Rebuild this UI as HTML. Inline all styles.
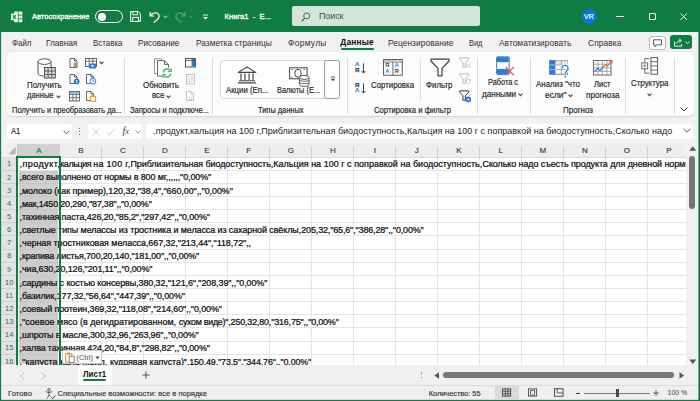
<!DOCTYPE html>
<html><head><meta charset="utf-8"><title>Excel</title>
<style>
html,body{margin:0;padding:0;}
body{width:700px;height:401px;overflow:hidden;position:relative;background:#f3f3f3;font-family:"Liberation Sans",sans-serif;}
.t{position:absolute;white-space:pre;margin:0;padding:0;}
.b{position:absolute;box-sizing:border-box;}
svg{overflow:visible;}
</style></head><body>
<div class="b" style="left:0px;top:0px;width:700px;height:32px;background:#107c41;"></div>
<div class="b" style="left:0px;top:32px;width:700px;height:369px;background:#f1f1f1;"></div>
<div class="b" style="left:6.8px;top:52px;width:686.8000000000001px;height:64.2px;background:#fcfcfc;border-radius:5px;box-shadow:0 0.6px 1.6px rgba(0,0,0,0.13);"></div>
<svg class="b" style="left:11px;top:10.6px;" width="11.8" height="11.8" viewBox="0 0 13 13">
<rect x="3.5" y="0.5" width="9" height="12" rx="1" fill="#e8f1ec"/>
<path d="M8 0.5V12.5M3.5 4.5H12.5M3.5 8.5H12.5" stroke="#107c41" stroke-width="0.9"/>
<rect x="0" y="2.8" width="7.4" height="7.4" rx="0.8" fill="#e8f1ec"/>
<path d="M2 4.6L5.4 8.6M5.4 4.6L2 8.6" stroke="#107c41" stroke-width="1.2"/></svg>
<div class="t" style="left:32.00px;top:10.90px;font-size:7.50px;line-height:11px;letter-spacing:0.025px;color:#fff;-webkit-text-stroke:0.30px #fff;">Автосохранение</div>
<div class="b" style="left:94.5px;top:10px;width:28.5px;height:13px;border:1.2px solid #fff;border-radius:7px;"></div>
<div class="b" style="left:97.5px;top:12.5px;width:8.0px;height:8.0px;background:#fff;border-radius:4px;"></div>
<svg class="b" style="left:130px;top:11px;" width="11" height="11" viewBox="0 0 11 11"><path d="M0.6 0.6H8.4L10.4 2.6V10.4H0.6Z M2.8 0.6V3.8H7.6V0.6 M2.6 10.4V6.4H8.4V10.4" fill="none" stroke="#fff" stroke-width="1"/></svg>
<svg class="b" style="left:149px;top:10.5px;" width="12" height="12" viewBox="0 0 12 12"><path d="M1.2 1V5H5.2" fill="none" stroke="#fff" stroke-width="1.2"/><path d="M1.6 4.6C3.5 1.2 8.2 0.8 9.8 3.8C11 6.4 8.6 9 4.6 11.4" fill="none" stroke="#fff" stroke-width="1.2"/></svg>
<svg class="b" style="left:163px;top:15px;" width="5" height="4" viewBox="0 0 5 4"><path d="M0.5 0.8L2.5 2.8L4.5 0.8" fill="none" stroke="#fff" stroke-width="0.9"/></svg>
<svg class="b" style="left:174px;top:10.5px;" width="12" height="12" viewBox="0 0 12 12"><path d="M10.8 1V5H6.8" fill="none" stroke="#5fa47f" stroke-width="1.2"/><path d="M10.4 4.6C8.5 1.2 3.8 0.8 2.2 3.8C1 6.4 3.4 9 7.4 11.4" fill="none" stroke="#5fa47f" stroke-width="1.2"/></svg>
<svg class="b" style="left:188px;top:15px;" width="5" height="4" viewBox="0 0 5 4"><path d="M0.5 0.8L2.5 2.8L4.5 0.8" fill="none" stroke="#5fa47f" stroke-width="0.9"/></svg>
<svg class="b" style="left:202px;top:13.5px;" width="7" height="7" viewBox="0 0 7 7"><path d="M1 1H6" stroke="#fff" stroke-width="0.9"/><path d="M1 3L3.5 5.6L6 3Z" fill="#fff"/></svg>
<div class="t" style="left:224.50px;top:10.90px;font-size:7.60px;line-height:11px;letter-spacing:0.014px;color:#fff;-webkit-text-stroke:0.30px #fff;">Книга1  -  E...</div>
<div class="b" style="left:292px;top:6.4px;width:188px;height:20.0px;background:#d4e4db;border-radius:2px;"></div>
<svg class="b" style="left:301px;top:11.5px;" width="10" height="10" viewBox="0 0 10 10"><circle cx="5.7" cy="3.9" r="3" fill="none" stroke="#2a6a46" stroke-width="0.95"/><path d="M3.6 6.1L0.7 9.4" stroke="#2a6a46" stroke-width="1.05"/></svg>
<div class="t" style="left:319.00px;top:10.30px;font-size:8.84px;line-height:13px;letter-spacing:0.000px;color:#245c3e;">Поиск</div>
<div class="b" style="left:581.7px;top:9.2px;width:15.0px;height:15.0px;background:#1270dd;border-radius:8px;"></div>
<div class="t" style="left:584.40px;top:11.20px;font-size:7.20px;line-height:11px;letter-spacing:0.000px;color:#fff;-webkit-text-stroke:0.20px #fff;transform:scaleX(0.9798);transform-origin:0 50%;">VR</div>
<div class="b" style="left:616.2px;top:16.1px;width:8.0px;height:1.0px;background:#fff;"></div>
<div class="b" style="left:648.6px;top:13.1px;width:7.199999999999932px;height:7.200000000000001px;border:1px solid #fff;border-radius:1px;"></div>
<svg class="b" style="left:680px;top:13px;" width="7.4" height="7.4" viewBox="0 0 7.4 7.4"><path d="M0.5 0.5L6.9 6.9M6.9 0.5L0.5 6.9" stroke="#fff" stroke-width="1"/></svg>
<div class="t" style="left:12.00px;top:36.60px;font-size:8.40px;line-height:12px;letter-spacing:0.000px;color:#303030;transform:scaleX(0.9442);transform-origin:0 50%;">Файл</div>
<div class="t" style="left:46.00px;top:36.60px;font-size:8.40px;line-height:12px;letter-spacing:-0.079px;color:#303030;">Главная</div>
<div class="t" style="left:93.00px;top:36.60px;font-size:8.40px;line-height:12px;letter-spacing:0.000px;color:#303030;transform:scaleX(0.9449);transform-origin:0 50%;">Вставка</div>
<div class="t" style="left:137.50px;top:36.60px;font-size:8.40px;line-height:12px;letter-spacing:0.000px;color:#303030;transform:scaleX(0.9810);transform-origin:0 50%;">Рисование</div>
<div class="t" style="left:196.00px;top:36.60px;font-size:8.40px;line-height:12px;letter-spacing:-0.013px;color:#303030;">Разметка страницы</div>
<div class="t" style="left:288.00px;top:36.60px;font-size:8.40px;line-height:12px;letter-spacing:0.324px;color:#303030;">Формулы</div>
<div class="t" style="left:388.00px;top:36.60px;font-size:8.40px;line-height:12px;letter-spacing:0.049px;color:#303030;">Рецензирование</div>
<div class="t" style="left:469.00px;top:36.60px;font-size:8.40px;line-height:12px;letter-spacing:0.000px;color:#303030;transform:scaleX(0.8883);transform-origin:0 50%;">Вид</div>
<div class="t" style="left:499.00px;top:36.60px;font-size:8.40px;line-height:12px;letter-spacing:0.028px;color:#303030;">Автоматизировать</div>
<div class="t" style="left:588.00px;top:36.60px;font-size:8.40px;line-height:12px;letter-spacing:0.091px;color:#303030;">Справка</div>
<div class="t" style="left:340.30px;top:36.30px;font-size:8.40px;line-height:12px;letter-spacing:0.170px;color:#111;font-weight:bold;">Данные</div>
<div class="b" style="left:340.5px;top:47.8px;width:33.5px;height:1.8000000000000043px;background:#107c41;border-radius:1px;"></div>
<div class="b" style="left:648.5px;top:35.5px;width:17.0px;height:14.0px;background:#fff;border:1px solid #b9b9b9;border-radius:3px;"></div>
<svg class="b" style="left:652.5px;top:38.5px;" width="9" height="9" viewBox="0 0 9 9"><path d="M0.6 0.8H8.4V5.8H3.8L2 7.8V5.8H0.6Z" fill="none" stroke="#444" stroke-width="0.9"/></svg>
<div class="b" style="left:670px;top:35.2px;width:21.5px;height:14.299999999999997px;background:#107c41;border-radius:3px;"></div>
<svg class="b" style="left:673.6px;top:38px;" width="10" height="9" viewBox="0 0 10 9"><path d="M0.6 3.4V8.2H7.6V6" fill="none" stroke="#fff" stroke-width="0.9"/><path d="M2.6 5.6C3 3.6 4.6 2.6 6.4 2.6M5 0.6L7.4 2.6L5 4.6" fill="none" stroke="#fff" stroke-width="0.9"/></svg>
<svg class="b" style="left:684.6px;top:41px;" width="5" height="4" viewBox="0 0 5 4"><path d="M0.5 0.6L2.5 2.6L4.5 0.6" fill="none" stroke="#fff" stroke-width="0.9"/></svg>
<div class="b" style="left:123.89999999999999px;top:57.5px;width:0.8000000000000114px;height:56.5px;background:#dcdcdc;"></div>
<div class="b" style="left:212.1px;top:57.5px;width:0.8000000000000114px;height:56.5px;background:#dcdcdc;"></div>
<div class="b" style="left:347.1px;top:57.5px;width:0.7999999999999545px;height:56.5px;background:#dcdcdc;"></div>
<div class="b" style="left:476.70000000000005px;top:57.5px;width:0.7999999999999545px;height:56.5px;background:#dcdcdc;"></div>
<div class="b" style="left:529.6px;top:57.5px;width:0.7999999999999545px;height:56.5px;background:#dcdcdc;"></div>
<div class="b" style="left:624.6px;top:57.5px;width:0.7999999999999545px;height:56.5px;background:#dcdcdc;"></div>
<div class="b" style="left:673.6px;top:57.5px;width:0.7999999999999545px;height:56.5px;background:#dcdcdc;"></div>
<div class="b" style="left:420.0px;top:58.5px;width:0.7999999999999545px;height:41.5px;background:#dcdcdc;"></div>
<div class="t" style="left:12.00px;top:104.30px;font-size:8.80px;line-height:13px;letter-spacing:0.000px;color:#262626;-webkit-text-stroke:0.18px #262626;transform:scaleX(0.8514);transform-origin:0 50%;">Получить и преобразовать да...</div>
<div class="t" style="left:130.00px;top:104.30px;font-size:8.80px;line-height:13px;letter-spacing:0.000px;color:#262626;-webkit-text-stroke:0.18px #262626;transform:scaleX(0.8568);transform-origin:0 50%;">Запросы и подключе...</div>
<div class="t" style="left:258.00px;top:104.30px;font-size:8.80px;line-height:13px;letter-spacing:0.000px;color:#262626;-webkit-text-stroke:0.18px #262626;transform:scaleX(0.8439);transform-origin:0 50%;">Типы данных</div>
<div class="t" style="left:374.00px;top:104.30px;font-size:8.80px;line-height:13px;letter-spacing:0.000px;color:#262626;-webkit-text-stroke:0.18px #262626;transform:scaleX(0.8729);transform-origin:0 50%;">Сортировка и фильтр</div>
<div class="t" style="left:563.00px;top:104.30px;font-size:8.80px;line-height:13px;letter-spacing:0.000px;color:#262626;-webkit-text-stroke:0.18px #262626;transform:scaleX(0.9087);transform-origin:0 50%;">Прогноз</div>
<svg class="b" style="left:36.5px;top:57.5px;" width="20" height="22" viewBox="0 0 20 22">
<path d="M1 3.6V15.4C1 17 4 18 7.5 18" fill="none" stroke="#555" stroke-width="1"/>
<path d="M14 3.6V9" fill="none" stroke="#555" stroke-width="1"/>
<ellipse cx="7.5" cy="3.6" rx="6.5" ry="2.8" fill="#fdfdfd" stroke="#555" stroke-width="1"/>
<rect x="7.5" y="9.5" width="10.8" height="10.5" fill="#d9d9d9" stroke="#444" stroke-width="0.9"/>
<path d="M7.5 13H18.3M7.5 16.5H18.3M11.1 9.5V20M14.7 9.5V20" stroke="#444" stroke-width="0.8"/></svg>
<div class="t" style="left:27.00px;top:78.50px;font-size:8.80px;line-height:13px;letter-spacing:0.000px;color:#262626;-webkit-text-stroke:0.18px #262626;transform:scaleX(0.8920);transform-origin:0 50%;">Получить</div>
<div class="t" style="left:27.00px;top:89.30px;font-size:8.80px;line-height:13px;letter-spacing:0.000px;color:#262626;-webkit-text-stroke:0.18px #262626;transform:scaleX(0.8557);transform-origin:0 50%;">данные</div>
<svg class="b" style="left:55.5px;top:94.5px;" width="5" height="4" viewBox="0 0 5 4"><path d="M0.6 0.7L2.5 2.7L4.4 0.7" fill="none" stroke="#444" stroke-width="1.15"/></svg>
<svg class="b" style="left:69px;top:58px;" width="11" height="11" viewBox="0 0 11 11"><path d="M1.0 0.5H5.5L8.0 3V9.5H1.0Z M5.5 0.5V3H8.0" fill="#fff" stroke="#555" stroke-width="0.9"/><rect x="4.6" y="4.6" width="3.6" height="4.6" fill="#9a9a9a"/></svg>
<svg class="b" style="left:69px;top:74px;" width="11" height="11" viewBox="0 0 11 11"><path d="M1.0 0.5H5.5L8.0 3V9.5H1.0Z M5.5 0.5V3H8.0" fill="#fff" stroke="#555" stroke-width="0.9"/><circle cx="7.6" cy="7.4" r="2.9" fill="#2b7cd3"/><path d="M7.6 6V9" stroke="#fff" stroke-width="0.9"/></svg>
<svg class="b" style="left:68.5px;top:91px;" width="11" height="11" viewBox="0 0 11 11"><rect x="0.5" y="0.5" width="10" height="9.5" fill="#fff" stroke="#555" stroke-width="0.9"/><path d="M0.5 3.4H10.5M0.5 6.6H10.5M3.8 0.5V10M7.2 0.5V10" stroke="#555" stroke-width="0.8"/><rect x="0.9" y="0.9" width="9.2" height="2.2" fill="#8fbce8"/></svg>
<svg class="b" style="left:84.5px;top:57.5px;" width="12" height="11" viewBox="0 0 12 11"><rect x="0.5" y="0.5" width="11" height="8" fill="#fff" stroke="#555" stroke-width="0.9"/><path d="M0.5 3.2H11.5M4.2 0.5V8.5M7.8 0.5V8.5" stroke="#555" stroke-width="0.8"/><rect x="4" y="5.4" width="7" height="5" rx="0.6" fill="#2b7cd3"/><circle cx="7.5" cy="7.9" r="1.1" fill="#fff"/></svg>
<svg class="b" style="left:99px;top:61px;" width="5" height="4" viewBox="0 0 5 4"><path d="M0.6 0.7L2.5 2.7L4.4 0.7" fill="none" stroke="#444" stroke-width="1.15"/></svg>
<svg class="b" style="left:85.5px;top:74px;" width="11" height="11" viewBox="0 0 11 11"><path d="M0.5 0.5H5L7.5 3V9.5H0.5Z M5 0.5V3H7.5" fill="#fff" stroke="#555" stroke-width="0.9"/><circle cx="6.9" cy="7.2" r="2.9" fill="#fff" stroke="#2b7cd3" stroke-width="1"/><path d="M6.9 5.6V7.4H8.2" fill="none" stroke="#2b7cd3" stroke-width="0.8"/></svg>
<svg class="b" style="left:85.5px;top:91px;" width="11" height="11" viewBox="0 0 11 11"><path d="M0.5 0.5H5L7.5 3V9.5H0.5Z M5 0.5V3H7.5" fill="#fff" stroke="#555" stroke-width="0.9"/><rect x="4.4" y="5.4" width="5.2" height="4.8" fill="#fff" stroke="#e8912d" stroke-width="1"/><path d="M5.8 5.2V4.2H8.2V5.2" fill="none" stroke="#e8912d" stroke-width="0.9"/></svg>
<svg class="b" style="left:152.5px;top:57.5px;" width="21" height="22" viewBox="0 0 21 22">
<path d="M1.5 0.8H8L11 3.8V15.5H1.5Z" fill="#fff" stroke="#8a8a8a" stroke-width="0.9"/>
<path d="M4.5 2.6H11.5L15.5 6.6V18H4.5Z" fill="#fff" stroke="#555" stroke-width="0.9"/>
<path d="M11.5 2.6V6.6H15.5" fill="none" stroke="#555" stroke-width="0.9"/>
<circle cx="14" cy="15" r="5.7" fill="#fcfcfc"/>
<path d="M10.3 14.3A3.8 3.8 0 0 1 17.3 12.7" fill="none" stroke="#53b471" stroke-width="1.5"/>
<path d="M18.2 10.2V13.5H14.9" fill="none" stroke="#53b471" stroke-width="1.2"/>
<path d="M17.7 15.7A3.8 3.8 0 0 1 10.7 17.3" fill="none" stroke="#53b471" stroke-width="1.5"/>
<path d="M9.8 19.8V16.5H13.1" fill="none" stroke="#53b471" stroke-width="1.2"/></svg>
<div class="t" style="left:143.00px;top:78.50px;font-size:8.80px;line-height:13px;letter-spacing:0.000px;color:#262626;-webkit-text-stroke:0.18px #262626;transform:scaleX(0.9035);transform-origin:0 50%;">Обновить</div>
<div class="t" style="left:152.00px;top:89.30px;font-size:8.80px;line-height:13px;letter-spacing:0.000px;color:#262626;-webkit-text-stroke:0.18px #262626;transform:scaleX(0.9012);transform-origin:0 50%;">все</div>
<svg class="b" style="left:166px;top:94.5px;" width="5" height="4" viewBox="0 0 5 4"><path d="M0.6 0.7L2.5 2.7L4.4 0.7" fill="none" stroke="#444" stroke-width="1.15"/></svg>
<svg class="b" style="left:184.5px;top:57.5px;" width="11" height="10" viewBox="0 0 11 10"><rect x="0.5" y="0.5" width="10" height="8.5" fill="#fff" stroke="#444" stroke-width="0.9"/><rect x="6.6" y="1" width="3.4" height="7.5" fill="#2b7cd3"/><path d="M0.5 2.6H10.5" stroke="#444" stroke-width="0.8"/></svg>
<svg class="b" style="left:185.5px;top:73.5px;" width="10" height="11" viewBox="0 0 10 11"><rect x="0.5" y="0.5" width="8" height="9.5" fill="#f6f6f6" stroke="#bdbdbd" stroke-width="0.9"/><path d="M2.4 3H4M5 3H6.8M2.4 5.2H4M5 5.2H6.8M2.4 7.4H4M5 7.4H6.8" stroke="#c2c2c2" stroke-width="0.8"/></svg>
<svg class="b" style="left:185.5px;top:91px;" width="10" height="11" viewBox="0 0 10 11"><path d="M0.5 0.5H5L7.5 3V9.5H0.5Z M5 0.5V3H7.5" fill="#fff" stroke="#bdbdbd" stroke-width="0.9"/><path d="M3 6.5C4 5 5 8 6.6 6.4M3 8.4H6.8" fill="none" stroke="#c6c6c6" stroke-width="0.8"/></svg>
<div class="b" style="left:219.8px;top:59.6px;width:120.39999999999998px;height:39.6px;background:#fdfdfd;border:0.8px solid #d9d9d9;border-radius:3.5px;"></div>
<div class="b" style="left:324.4px;top:59.6px;width:15.800000000000011px;height:39.6px;background:#fff;border:0.9px solid #9a9a9a;border-radius:2.5px;"></div>
<svg class="b" style="left:329.5px;top:76px;" width="6" height="6" viewBox="0 0 6 6"><path d="M0.8 1H5.2" stroke="#444" stroke-width="0.8"/><path d="M0.8 2.8H5.2L3 5.2Z" fill="#444"/></svg>
<svg class="b" style="left:237px;top:66.3px;" width="20" height="18" viewBox="0 0 20 18">
<path d="M1.2 6.4L10 1L18.8 6.4Z" fill="#fff" stroke="#444" stroke-width="1.1" stroke-linejoin="round"/>
<path d="M4 7.5V14M7.9 7.5V14M12.1 7.5V14M16 7.5V14" stroke="#444" stroke-width="1.2"/>
<path d="M2 14.8H18M1 16.9H19" stroke="#444" stroke-width="1.1"/></svg>
<div class="t" style="left:226.00px;top:83.50px;font-size:8.80px;line-height:13px;letter-spacing:0.000px;color:#262626;-webkit-text-stroke:0.18px #262626;transform:scaleX(0.8842);transform-origin:0 50%;">Акции (En...</div>
<svg class="b" style="left:288.5px;top:66.6px;" width="21" height="20" viewBox="0 0 21 20">
<rect x="0.6" y="0.8" width="17.5" height="11" fill="#fff" stroke="#444" stroke-width="1"/>
<ellipse cx="9" cy="6.3" rx="3.2" ry="4" fill="none" stroke="#444" stroke-width="1"/>
<path d="M2.4 2.4H3.8M14.6 2.4H16M2.4 10.2H3.8" stroke="#444" stroke-width="0.9"/>
<path d="M10.4 10.6V17.2C10.4 18.6 12.4 19.4 15.2 19.4C18 19.4 20 18.6 20 17.2V10.6" fill="#fff" stroke="#444" stroke-width="0.9"/>
<ellipse cx="15.2" cy="10.4" rx="4.8" ry="2" fill="#fff" stroke="#444" stroke-width="0.9"/>
<path d="M10.4 13C11 14.6 19.4 14.6 20 13M10.4 15.4C11 17 19.4 17 20 15.4" fill="none" stroke="#444" stroke-width="0.8"/></svg>
<div class="t" style="left:277.00px;top:83.50px;font-size:8.80px;line-height:13px;letter-spacing:0.000px;color:#262626;-webkit-text-stroke:0.18px #262626;transform:scaleX(0.8392);transform-origin:0 50%;">Валюты (E...</div>
<div class="t" style="left:355px;top:62.3px;font-size:6px;line-height:5.6px;font-weight:bold;color:#3a96dd;-webkit-text-stroke:0.25px #3a96dd;">А</div>
<div class="t" style="left:355px;top:67.89999999999999px;font-size:6px;line-height:5.6px;font-weight:bold;color:#3a3a3a;-webkit-text-stroke:0.25px #3a3a3a;">Я</div>
<svg class="b" style="left:361.1px;top:62.5px;" width="5" height="11" viewBox="0 0 5 11"><path d="M2.5 0.3V10M0.7 8L2.5 10.1L4.3 8" fill="none" stroke="#3a3a3a" stroke-width="0.95"/></svg>
<div class="t" style="left:355px;top:82.8px;font-size:6px;line-height:5.6px;font-weight:bold;color:#3a3a3a;-webkit-text-stroke:0.25px #3a3a3a;">Я</div>
<div class="t" style="left:355px;top:88.39999999999999px;font-size:6px;line-height:5.6px;font-weight:bold;color:#3a96dd;-webkit-text-stroke:0.25px #3a96dd;">А</div>
<svg class="b" style="left:361.1px;top:83.0px;" width="5" height="11" viewBox="0 0 5 11"><path d="M2.5 0.3V10M0.7 8L2.5 10.1L4.3 8" fill="none" stroke="#3a3a3a" stroke-width="0.95"/></svg>
<svg class="b" style="left:383px;top:58.5px;" width="20" height="17" viewBox="0 0 20 17">
<rect x="0.6" y="0.6" width="18.6" height="15.6" fill="#fff" stroke="#444" stroke-width="0.9"/>
<path d="M0.6 3H19.2M9.9 0.6V16.2" stroke="#444" stroke-width="0.8"/>
<rect x="1" y="1" width="17.8" height="1.8" fill="#c8c8c8"/></svg>
<div class="t" style="left:385.2px;top:62.400000000000006px;font-size:5.8px;line-height:6px;font-weight:bold;color:#444;">Я</div>
<div class="t" style="left:385.2px;top:68.4px;font-size:5.8px;line-height:6px;font-weight:bold;color:#2b7cd3;">А</div>
<div class="t" style="left:394.4px;top:62.400000000000006px;font-size:5.8px;line-height:6px;font-weight:bold;color:#2b7cd3;">А</div>
<div class="t" style="left:394.4px;top:68.4px;font-size:5.8px;line-height:6px;font-weight:bold;color:#444;">Я</div>
<div class="t" style="left:371.00px;top:78.50px;font-size:8.80px;line-height:13px;letter-spacing:0.000px;color:#262626;-webkit-text-stroke:0.18px #262626;transform:scaleX(0.8903);transform-origin:0 50%;">Сортировка</div>
<svg class="b" style="left:430px;top:57.5px;" width="20" height="19" viewBox="0 0 20 19"><path d="M1 1.2H19V3L12 10.4V17.8H8V10.4L1 3Z" fill="#fff" stroke="#444" stroke-width="1.25" stroke-linejoin="round"/></svg>
<div class="t" style="left:426.00px;top:78.50px;font-size:8.80px;line-height:13px;letter-spacing:0.000px;color:#262626;-webkit-text-stroke:0.18px #262626;transform:scaleX(0.8964);transform-origin:0 50%;">Фильтр</div>
<svg class="b" style="left:458.6px;top:56.8px;" width="13.2" height="12.1" viewBox="0 0 12 11"><path d="M0.6 0.8H8.8V2L5.8 5.2V9.4H3.6V5.2L0.6 2Z" fill="#fff" stroke="#b9b9b9" stroke-width="0.9" stroke-linejoin="round"/><path d="M7 6.4L10.4 9.8M10.4 6.4L7 9.8" stroke="#c8c8c8" stroke-width="0.9"/></svg>
<svg class="b" style="left:458.6px;top:73.2px;" width="13.2" height="12.1" viewBox="0 0 12 11"><path d="M0.6 0.8H8.8V2L5.8 5.2V9.4H3.6V5.2L0.6 2Z" fill="#fff" stroke="#b9b9b9" stroke-width="0.9" stroke-linejoin="round"/><path d="M9.6 6A2 2 0 1 0 10.4 8.6M10.6 5.4V7H9" fill="none" stroke="#c8c8c8" stroke-width="0.8"/></svg>
<svg class="b" style="left:458.6px;top:90.4px;" width="13.2" height="13.2" viewBox="0 0 12 12"><path d="M0.6 0.8H8.8V2L5.8 5.2V9.4H3.6V5.2L0.6 2Z" fill="#fff" stroke="#333" stroke-width="0.9" stroke-linejoin="round"/><circle cx="8.4" cy="8.6" r="2.6" fill="#2b7cd3"/><circle cx="8.4" cy="8.6" r="0.9" fill="#fff"/></svg>
<svg class="b" style="left:496px;top:56px;" width="20" height="21" viewBox="0 0 20 21">
<rect x="0.6" y="0.8" width="12.6" height="17.6" rx="0.8" fill="#fff" stroke="#2b7cd3" stroke-width="1"/>
<rect x="1" y="1.2" width="11.8" height="5.4" fill="#2b7cd3"/>
<rect x="1" y="12.6" width="11.8" height="5.4" fill="#2b7cd3"/>
<path d="M0.6 6.6H13.2M0.6 12.6H13.2" stroke="#fff" stroke-width="0.8"/>
<path d="M9.6 11L17.8 19.2M17.8 11L9.6 19.2" stroke="#ea5b53" stroke-width="1.25"/></svg>
<div class="t" style="left:488.00px;top:76.10px;font-size:8.80px;line-height:13px;letter-spacing:0.000px;color:#262626;-webkit-text-stroke:0.18px #262626;transform:scaleX(0.8360);transform-origin:0 50%;">Работа с</div>
<div class="t" style="left:482.00px;top:88.00px;font-size:8.80px;line-height:13px;letter-spacing:0.000px;color:#262626;-webkit-text-stroke:0.18px #262626;transform:scaleX(0.9179);transform-origin:0 50%;">данными</div>
<svg class="b" style="left:517.5px;top:93.2px;" width="5" height="4" viewBox="0 0 5 4"><path d="M0.6 0.7L2.5 2.7L4.4 0.7" fill="none" stroke="#444" stroke-width="1.15"/></svg>
<svg class="b" style="left:548.8px;top:59.6px;" width="22" height="18" viewBox="0 0 22 18">
<rect x="0.6" y="0.6" width="18" height="13.6" fill="#fff" stroke="#7a7a7a" stroke-width="0.9"/>
<rect x="6.4" y="0.6" width="12.2" height="4.4" fill="#e4e4e4"/>
<path d="M6.4 5H18.6M6.4 9.6H18.6M12.4 0.6V14.2" stroke="#8a8a8a" stroke-width="0.75"/>
<rect x="0.4" y="0.4" width="6" height="14" fill="#2b7cd3"/>
<path d="M0.4 5H6.4M0.4 9.6H6.4" stroke="#bcd9f3" stroke-width="0.8"/>
<path d="M12.6 8.4A3.3 3.1 0 1 1 17.6 11C16.6 11.8 16.3 12.4 16.3 13.8" fill="none" stroke="#fcfcfc" stroke-width="3.2"/>
<path d="M12.8 8.4A3.1 3 0 1 1 17.4 11C16.5 11.8 16.3 12.4 16.3 13.8" fill="none" stroke="#2b7cd3" stroke-width="1.3"/>
<circle cx="16.3" cy="16.6" r="0.95" fill="#2b7cd3"/></svg>
<div class="t" style="left:536.00px;top:78.10px;font-size:8.80px;line-height:13px;letter-spacing:0.000px;color:#262626;-webkit-text-stroke:0.18px #262626;transform:scaleX(0.9037);transform-origin:0 50%;">Анализ "что</div>
<div class="t" style="left:544.50px;top:88.70px;font-size:8.80px;line-height:13px;letter-spacing:0.000px;color:#262626;-webkit-text-stroke:0.18px #262626;transform:scaleX(0.9569);transform-origin:0 50%;">если"</div>
<svg class="b" style="left:567.5px;top:94px;" width="5" height="4" viewBox="0 0 5 4"><path d="M0.6 0.7L2.5 2.7L4.4 0.7" fill="none" stroke="#444" stroke-width="1.15"/></svg>
<svg class="b" style="left:592.5px;top:58.5px;" width="20" height="17" viewBox="0 0 20 17">
<rect x="0.6" y="1.6" width="17.4" height="14.4" fill="#fff" stroke="#555" stroke-width="0.9"/>
<path d="M0.6 5.2H18M0.6 8.8H18M0.6 12.4H18M5 1.6V16M9.4 1.6V16M13.8 1.6V16" stroke="#8a8a8a" stroke-width="0.7"/>
<path d="M1.4 12.6L4.6 9.4L7.2 11.4L10 8.4" fill="none" stroke="#2b7cd3" stroke-width="1.2"/>
<path d="M10 8.4L12.6 5.6L14.6 7L18.2 2" fill="none" stroke="#e8554e" stroke-width="1.2"/>
<path d="M15.8 1.2H19V4.6" fill="none" stroke="#e8554e" stroke-width="1.1"/></svg>
<div class="t" style="left:594.00px;top:78.10px;font-size:8.80px;line-height:13px;letter-spacing:0.000px;color:#262626;-webkit-text-stroke:0.18px #262626;transform:scaleX(0.8629);transform-origin:0 50%;">Лист</div>
<div class="t" style="left:585.50px;top:88.70px;font-size:8.80px;line-height:13px;letter-spacing:0.000px;color:#262626;-webkit-text-stroke:0.18px #262626;transform:scaleX(0.9216);transform-origin:0 50%;">прогноза</div>
<svg class="b" style="left:640.6px;top:56.6px;" width="18" height="18" viewBox="0 0 18 18">
<rect x="10" y="0.6" width="6.6" height="16.6" fill="#fff" stroke="#555" stroke-width="0.95"/>
<path d="M10 4.75H16.6M10 8.9H16.6M10 13.05H16.6" stroke="#555" stroke-width="0.85"/>
<path d="M8.4 1.6H3.8V16.2H8.4" fill="none" stroke="#555" stroke-width="0.85"/>
<rect x="0.8" y="5.9" width="5.9" height="5.9" fill="#fff" stroke="#555" stroke-width="0.85"/>
<path d="M2.3 8.85H5.2M3.75 7.4V10.3" stroke="#2b7cd3" stroke-width="0.95"/></svg>
<div class="t" style="left:631.00px;top:76.70px;font-size:8.80px;line-height:13px;letter-spacing:0.000px;color:#262626;-webkit-text-stroke:0.18px #262626;transform:scaleX(0.8982);transform-origin:0 50%;">Структура</div>
<svg class="b" style="left:647px;top:93px;" width="5" height="4" viewBox="0 0 5 4"><path d="M0.6 0.7L2.5 2.7L4.4 0.7" fill="none" stroke="#444" stroke-width="1.15"/></svg>
<svg class="b" style="left:680px;top:106.5px;" width="8" height="5" viewBox="0 0 8 5"><path d="M0.6 0.6L4 4L7.4 0.6" fill="none" stroke="#444" stroke-width="1"/></svg>
<div class="b" style="left:7.4px;top:123.9px;width:64.8px;height:15.0px;background:#fff;border-radius:3px;"></div>
<div class="t" style="left:10.70px;top:124.90px;font-size:8.90px;line-height:13px;letter-spacing:0.000px;color:#1a1a1a;-webkit-text-stroke:0.12px #1a1a1a;transform:scaleX(0.8635);transform-origin:0 50%;">A1</div>
<svg class="b" style="left:63px;top:129.5px;" width="7" height="5" viewBox="0 0 7 5"><path d="M0.6 0.8L3.5 3.8L6.4 0.8" fill="none" stroke="#444" stroke-width="0.9"/></svg>
<div class="b" style="left:78.5px;top:128px;width:1.2000000000000028px;height:1.1999999999999886px;background:#555;border-radius:1px;"></div>
<div class="b" style="left:78.5px;top:131px;width:1.2000000000000028px;height:1.1999999999999886px;background:#555;border-radius:1px;"></div>
<div class="b" style="left:78.5px;top:134px;width:1.2000000000000028px;height:1.1999999999999886px;background:#555;border-radius:1px;"></div>
<div class="b" style="left:87.5px;top:123.9px;width:54.5px;height:15.0px;background:#fff;border-radius:3px;"></div>
<div class="b" style="left:146.3px;top:123.9px;width:546.5px;height:15.0px;background:#fff;border-radius:3px;"></div>
<svg class="b" style="left:91.5px;top:128px;" width="8" height="8" viewBox="0 0 8 8"><path d="M0.6 0.6L7.4 7.4M7.4 0.6L0.6 7.4" stroke="#c9c9c9" stroke-width="0.9"/></svg>
<svg class="b" style="left:106px;top:128px;" width="9" height="8" viewBox="0 0 9 8"><path d="M0.6 4.2L3.2 7L8.4 0.8" fill="none" stroke="#c9c9c9" stroke-width="0.9"/></svg>
<div class="t" style="left:122.5px;top:124.3px;font-family:'Liberation Serif',serif;font-style:italic;font-size:10.5px;line-height:14px;color:#444;letter-spacing:-0.3px;">f<span style="font-size:8.5px;">x</span></div>
<svg class="b" style="left:135px;top:130px;" width="6" height="4" viewBox="0 0 6 4"><path d="M0.5 0.6L3 3.2L5.5 0.6" fill="none" stroke="#777" stroke-width="0.8"/></svg>
<div class="t" style="left:153.30px;top:124.80px;font-size:9.00px;line-height:13px;letter-spacing:0.000px;color:#222;">,продукт,кальция на 100 г,Приблизительная биодоступность,Кальция на 100 г с поправкой на биодоступность,Сколько надо</div>
<svg class="b" style="left:683.3px;top:128.3px;" width="8" height="5" viewBox="0 0 8 5"><path d="M0.6 0.8L4 4.2L7.4 0.8" fill="none" stroke="#444" stroke-width="0.9"/></svg>
<div class="b" style="left:1.3px;top:157.0px;width:684.7px;height:207.5px;background:#fff;"></div>
<div class="b" style="left:1.3px;top:144.0px;width:684.7px;height:13.0px;background:#eeeeee;"></div>
<div class="b" style="left:1.3px;top:144.0px;width:16.2px;height:13.0px;background:#f1f1f1;"></div>
<div class="b" style="left:1.3px;top:157.0px;width:16.2px;height:207.5px;background:#e3e3e3;"></div>
<div class="b" style="left:17.5px;top:144.0px;width:42.0px;height:13.0px;background:#d1d1d1;"></div>
<svg class="b" style="left:7.6px;top:146.4px;" width="8" height="9" viewBox="0 0 8 9"><path d="M7.6 0.4V8.6H0.4Z" fill="#b5b5b5"/></svg>
<div class="b" style="left:19.3px;top:170.15px;width:38.3px;height:194.35px;background:#cdcdcd;"></div>
<div class="b" style="left:59.0px;top:146.0px;width:1.0px;height:11.0px;background:#cfcfcf;"></div>
<div class="b" style="left:59.0px;top:157.0px;width:1.0px;height:207.5px;background:#e5e5e5;"></div>
<div class="b" style="left:101.0px;top:146.0px;width:1.0px;height:11.0px;background:#cfcfcf;"></div>
<div class="b" style="left:101.0px;top:157.0px;width:1.0px;height:207.5px;background:#e5e5e5;"></div>
<div class="b" style="left:143.0px;top:146.0px;width:1.0px;height:11.0px;background:#cfcfcf;"></div>
<div class="b" style="left:143.0px;top:157.0px;width:1.0px;height:207.5px;background:#e5e5e5;"></div>
<div class="b" style="left:185.0px;top:146.0px;width:1.0px;height:11.0px;background:#cfcfcf;"></div>
<div class="b" style="left:185.0px;top:157.0px;width:1.0px;height:207.5px;background:#e5e5e5;"></div>
<div class="b" style="left:227.0px;top:146.0px;width:1.0px;height:11.0px;background:#cfcfcf;"></div>
<div class="b" style="left:227.0px;top:157.0px;width:1.0px;height:207.5px;background:#e5e5e5;"></div>
<div class="b" style="left:269.0px;top:146.0px;width:1.0px;height:11.0px;background:#cfcfcf;"></div>
<div class="b" style="left:269.0px;top:157.0px;width:1.0px;height:207.5px;background:#e5e5e5;"></div>
<div class="b" style="left:311.0px;top:146.0px;width:1.0px;height:11.0px;background:#cfcfcf;"></div>
<div class="b" style="left:311.0px;top:157.0px;width:1.0px;height:207.5px;background:#e5e5e5;"></div>
<div class="b" style="left:353.0px;top:146.0px;width:1.0px;height:11.0px;background:#cfcfcf;"></div>
<div class="b" style="left:353.0px;top:157.0px;width:1.0px;height:207.5px;background:#e5e5e5;"></div>
<div class="b" style="left:395.0px;top:146.0px;width:1.0px;height:11.0px;background:#cfcfcf;"></div>
<div class="b" style="left:395.0px;top:157.0px;width:1.0px;height:207.5px;background:#e5e5e5;"></div>
<div class="b" style="left:437.0px;top:146.0px;width:1.0px;height:11.0px;background:#cfcfcf;"></div>
<div class="b" style="left:437.0px;top:157.0px;width:1.0px;height:207.5px;background:#e5e5e5;"></div>
<div class="b" style="left:479.0px;top:146.0px;width:1.0px;height:11.0px;background:#cfcfcf;"></div>
<div class="b" style="left:479.0px;top:157.0px;width:1.0px;height:207.5px;background:#e5e5e5;"></div>
<div class="b" style="left:521.0px;top:146.0px;width:1.0px;height:11.0px;background:#cfcfcf;"></div>
<div class="b" style="left:521.0px;top:157.0px;width:1.0px;height:207.5px;background:#e5e5e5;"></div>
<div class="b" style="left:563.0px;top:146.0px;width:1.0px;height:11.0px;background:#cfcfcf;"></div>
<div class="b" style="left:563.0px;top:157.0px;width:1.0px;height:207.5px;background:#e5e5e5;"></div>
<div class="b" style="left:605.0px;top:146.0px;width:1.0px;height:11.0px;background:#cfcfcf;"></div>
<div class="b" style="left:605.0px;top:157.0px;width:1.0px;height:207.5px;background:#e5e5e5;"></div>
<div class="b" style="left:647.0px;top:146.0px;width:1.0px;height:11.0px;background:#cfcfcf;"></div>
<div class="b" style="left:647.0px;top:157.0px;width:1.0px;height:207.5px;background:#e5e5e5;"></div>
<div class="b" style="left:17.5px;top:169.65px;width:668.5px;height:1.0px;background:#e5e5e5;"></div>
<div class="b" style="left:1.3px;top:169.65px;width:16.2px;height:1.0px;background:#d2d2d2;"></div>
<div class="b" style="left:17.5px;top:182.8px;width:668.5px;height:1.0px;background:#e5e5e5;"></div>
<div class="b" style="left:1.3px;top:182.8px;width:16.2px;height:1.0px;background:#d2d2d2;"></div>
<div class="b" style="left:17.5px;top:195.95px;width:668.5px;height:1.0px;background:#e5e5e5;"></div>
<div class="b" style="left:1.3px;top:195.95px;width:16.2px;height:1.0px;background:#d2d2d2;"></div>
<div class="b" style="left:17.5px;top:209.1px;width:668.5px;height:1.0px;background:#e5e5e5;"></div>
<div class="b" style="left:1.3px;top:209.1px;width:16.2px;height:1.0px;background:#d2d2d2;"></div>
<div class="b" style="left:17.5px;top:222.25px;width:668.5px;height:1.0px;background:#e5e5e5;"></div>
<div class="b" style="left:1.3px;top:222.25px;width:16.2px;height:1.0px;background:#d2d2d2;"></div>
<div class="b" style="left:17.5px;top:235.4px;width:668.5px;height:1.0px;background:#e5e5e5;"></div>
<div class="b" style="left:1.3px;top:235.4px;width:16.2px;height:1.0px;background:#d2d2d2;"></div>
<div class="b" style="left:17.5px;top:248.55px;width:668.5px;height:1.0px;background:#e5e5e5;"></div>
<div class="b" style="left:1.3px;top:248.55px;width:16.2px;height:1.0px;background:#d2d2d2;"></div>
<div class="b" style="left:17.5px;top:261.7px;width:668.5px;height:1.0px;background:#e5e5e5;"></div>
<div class="b" style="left:1.3px;top:261.7px;width:16.2px;height:1.0px;background:#d2d2d2;"></div>
<div class="b" style="left:17.5px;top:274.85px;width:668.5px;height:1.0px;background:#e5e5e5;"></div>
<div class="b" style="left:1.3px;top:274.85px;width:16.2px;height:1.0px;background:#d2d2d2;"></div>
<div class="b" style="left:17.5px;top:288.0px;width:668.5px;height:1.0px;background:#e5e5e5;"></div>
<div class="b" style="left:1.3px;top:288.0px;width:16.2px;height:1.0px;background:#d2d2d2;"></div>
<div class="b" style="left:17.5px;top:301.15px;width:668.5px;height:1.0px;background:#e5e5e5;"></div>
<div class="b" style="left:1.3px;top:301.15px;width:16.2px;height:1.0px;background:#d2d2d2;"></div>
<div class="b" style="left:17.5px;top:314.3px;width:668.5px;height:1.0px;background:#e5e5e5;"></div>
<div class="b" style="left:1.3px;top:314.3px;width:16.2px;height:1.0px;background:#d2d2d2;"></div>
<div class="b" style="left:17.5px;top:327.45000000000005px;width:668.5px;height:1.0px;background:#e5e5e5;"></div>
<div class="b" style="left:1.3px;top:327.45000000000005px;width:16.2px;height:1.0px;background:#d2d2d2;"></div>
<div class="b" style="left:17.5px;top:340.6px;width:668.5px;height:1.0px;background:#e5e5e5;"></div>
<div class="b" style="left:1.3px;top:340.6px;width:16.2px;height:1.0px;background:#d2d2d2;"></div>
<div class="b" style="left:17.5px;top:353.75px;width:668.5px;height:1.0px;background:#e5e5e5;"></div>
<div class="b" style="left:1.3px;top:353.75px;width:16.2px;height:1.0px;background:#d2d2d2;"></div>
<div class="b" style="left:1.3px;top:156.5px;width:684.7px;height:1.0px;background:#dcdcdc;"></div>
<div class="b" style="left:17.0px;top:144.0px;width:1.0px;height:220.5px;background:#c9c9c9;"></div>
<div class="b" style="left:19.3px;top:182.8px;width:38.3px;height:1.0px;background:#c6c6c6;"></div>
<div class="b" style="left:19.3px;top:195.95px;width:38.3px;height:1.0px;background:#c6c6c6;"></div>
<div class="b" style="left:19.3px;top:209.1px;width:38.3px;height:1.0px;background:#c6c6c6;"></div>
<div class="b" style="left:19.3px;top:222.25px;width:38.3px;height:1.0px;background:#c6c6c6;"></div>
<div class="b" style="left:19.3px;top:235.4px;width:38.3px;height:1.0px;background:#c6c6c6;"></div>
<div class="b" style="left:19.3px;top:248.55px;width:38.3px;height:1.0px;background:#c6c6c6;"></div>
<div class="b" style="left:19.3px;top:261.7px;width:38.3px;height:1.0px;background:#c6c6c6;"></div>
<div class="b" style="left:19.3px;top:274.85px;width:38.3px;height:1.0px;background:#c6c6c6;"></div>
<div class="b" style="left:19.3px;top:288.0px;width:38.3px;height:1.0px;background:#c6c6c6;"></div>
<div class="b" style="left:19.3px;top:301.15px;width:38.3px;height:1.0px;background:#c6c6c6;"></div>
<div class="b" style="left:19.3px;top:314.3px;width:38.3px;height:1.0px;background:#c6c6c6;"></div>
<div class="b" style="left:19.3px;top:327.45000000000005px;width:38.3px;height:1.0px;background:#c6c6c6;"></div>
<div class="b" style="left:19.3px;top:340.6px;width:38.3px;height:1.0px;background:#c6c6c6;"></div>
<div class="b" style="left:19.3px;top:353.75px;width:38.3px;height:1.0px;background:#c6c6c6;"></div>
<div class="t" style="left:36.13px;top:144.80px;font-size:8.00px;line-height:12px;letter-spacing:0.000px;color:#107c41;-webkit-text-stroke:0.15px #107c41;">A</div>
<div class="t" style="left:78.13px;top:144.80px;font-size:8.00px;line-height:12px;letter-spacing:0.000px;color:#333;-webkit-text-stroke:0.15px #333;">B</div>
<div class="t" style="left:119.91px;top:144.80px;font-size:8.00px;line-height:12px;letter-spacing:0.000px;color:#333;-webkit-text-stroke:0.15px #333;">C</div>
<div class="t" style="left:161.91px;top:144.80px;font-size:8.00px;line-height:12px;letter-spacing:-0.000px;color:#333;-webkit-text-stroke:0.15px #333;">D</div>
<div class="t" style="left:204.13px;top:144.80px;font-size:8.00px;line-height:12px;letter-spacing:0.000px;color:#333;-webkit-text-stroke:0.15px #333;">E</div>
<div class="t" style="left:246.36px;top:144.80px;font-size:8.00px;line-height:12px;letter-spacing:-0.000px;color:#333;-webkit-text-stroke:0.15px #333;">F</div>
<div class="t" style="left:287.69px;top:144.80px;font-size:8.00px;line-height:12px;letter-spacing:-0.000px;color:#333;-webkit-text-stroke:0.15px #333;">G</div>
<div class="t" style="left:329.91px;top:144.80px;font-size:8.00px;line-height:12px;letter-spacing:0.000px;color:#333;-webkit-text-stroke:0.15px #333;">H</div>
<div class="t" style="left:373.69px;top:144.80px;font-size:8.00px;line-height:12px;letter-spacing:-0.000px;color:#333;-webkit-text-stroke:0.15px #333;">I</div>
<div class="t" style="left:414.80px;top:144.80px;font-size:8.00px;line-height:12px;letter-spacing:0.000px;color:#333;-webkit-text-stroke:0.15px #333;">J</div>
<div class="t" style="left:456.13px;top:144.80px;font-size:8.00px;line-height:12px;letter-spacing:-0.000px;color:#333;-webkit-text-stroke:0.15px #333;">K</div>
<div class="t" style="left:498.58px;top:144.80px;font-size:8.00px;line-height:12px;letter-spacing:0.000px;color:#333;-webkit-text-stroke:0.15px #333;">L</div>
<div class="t" style="left:539.47px;top:144.80px;font-size:8.00px;line-height:12px;letter-spacing:0.000px;color:#333;-webkit-text-stroke:0.15px #333;">M</div>
<div class="t" style="left:581.91px;top:144.80px;font-size:8.00px;line-height:12px;letter-spacing:-0.000px;color:#333;-webkit-text-stroke:0.15px #333;">N</div>
<div class="t" style="left:623.69px;top:144.80px;font-size:8.00px;line-height:12px;letter-spacing:0.000px;color:#333;-webkit-text-stroke:0.15px #333;">O</div>
<div class="t" style="left:666.13px;top:144.80px;font-size:8.00px;line-height:12px;letter-spacing:0.000px;color:#333;-webkit-text-stroke:0.15px #333;">P</div>
<div class="t" style="left:7.09px;top:158.38px;font-size:7.60px;line-height:11px;letter-spacing:-0.000px;color:#23774a;">1</div>
<div class="t" style="left:7.09px;top:171.53px;font-size:7.60px;line-height:11px;letter-spacing:-0.000px;color:#23774a;">2</div>
<div class="t" style="left:7.09px;top:184.68px;font-size:7.60px;line-height:11px;letter-spacing:-0.000px;color:#23774a;">3</div>
<div class="t" style="left:7.09px;top:197.82px;font-size:7.60px;line-height:11px;letter-spacing:-0.000px;color:#23774a;">4</div>
<div class="t" style="left:7.09px;top:210.97px;font-size:7.60px;line-height:11px;letter-spacing:-0.000px;color:#23774a;">5</div>
<div class="t" style="left:7.09px;top:224.12px;font-size:7.60px;line-height:11px;letter-spacing:-0.000px;color:#23774a;">6</div>
<div class="t" style="left:7.09px;top:237.28px;font-size:7.60px;line-height:11px;letter-spacing:-0.000px;color:#23774a;">7</div>
<div class="t" style="left:7.09px;top:250.43px;font-size:7.60px;line-height:11px;letter-spacing:-0.000px;color:#23774a;">8</div>
<div class="t" style="left:7.09px;top:263.57px;font-size:7.60px;line-height:11px;letter-spacing:-0.000px;color:#23774a;">9</div>
<div class="t" style="left:4.97px;top:276.73px;font-size:7.60px;line-height:11px;letter-spacing:-0.000px;color:#23774a;">10</div>
<div class="t" style="left:5.26px;top:289.88px;font-size:7.60px;line-height:11px;letter-spacing:0.000px;color:#23774a;">11</div>
<div class="t" style="left:4.97px;top:303.02px;font-size:7.60px;line-height:11px;letter-spacing:-0.000px;color:#23774a;">12</div>
<div class="t" style="left:4.97px;top:316.18px;font-size:7.60px;line-height:11px;letter-spacing:-0.000px;color:#23774a;">13</div>
<div class="t" style="left:4.97px;top:329.33px;font-size:7.60px;line-height:11px;letter-spacing:-0.000px;color:#23774a;">14</div>
<div class="t" style="left:4.97px;top:342.48px;font-size:7.60px;line-height:11px;letter-spacing:-0.000px;color:#23774a;">15</div>
<div class="t" style="left:4.97px;top:355.62px;font-size:7.60px;line-height:11px;letter-spacing:-0.000px;color:#23774a;">16</div>
<div class="b" style="left:17.5px;top:157.0px;width:668.5px;height:207.5px;overflow:hidden;">
<div class="t" style="left:2.10px;top:1.28px;font-size:8.96px;line-height:12px;letter-spacing:0.462px;color:#0c0c0c;-webkit-text-stroke:0.24px #0c0c0c;">,продукт,</div>
<div class="t" style="left:42.70px;top:1.28px;font-size:8.96px;line-height:12px;letter-spacing:-0.428px;color:#0c0c0c;-webkit-text-stroke:0.24px #0c0c0c;">кальция </div>
<div class="t" style="left:75.75px;top:1.28px;font-size:8.96px;line-height:12px;letter-spacing:0.303px;color:#0c0c0c;-webkit-text-stroke:0.24px #0c0c0c;">на 100 г,</div>
<div class="t" style="left:113.00px;top:1.28px;font-size:8.96px;line-height:12px;letter-spacing:-0.079px;color:#0c0c0c;-webkit-text-stroke:0.24px #0c0c0c;">Приблизительная биодоступность,</div>
<div class="t" style="left:255.75px;top:1.28px;font-size:8.96px;line-height:12px;letter-spacing:0.041px;color:#0c0c0c;-webkit-text-stroke:0.24px #0c0c0c;">Кальция на 100 г с поправкой на биодоступность,</div>
<div class="t" style="left:465.00px;top:1.28px;font-size:8.96px;line-height:12px;letter-spacing:-0.074px;color:#0c0c0c;-webkit-text-stroke:0.24px #0c0c0c;">Сколько надо съесть продукта для дневной норм</div>
<div class="t" style="left:667.80px;top:1.28px;font-size:8.96px;line-height:12px;letter-spacing:0.000px;color:#0c0c0c;-webkit-text-stroke:0.24px #0c0c0c;">ы</div>
<div class="t" style="left:2.10px;top:14.43px;font-size:8.96px;line-height:12px;letter-spacing:-0.107px;color:#0c0c0c;-webkit-text-stroke:0.24px #0c0c0c;">,всего выполнено от нормы в 800 мг,,,,,,"0,00%"</div>
<div class="t" style="left:2.10px;top:27.58px;font-size:8.96px;line-height:12px;letter-spacing:-0.067px;color:#0c0c0c;-webkit-text-stroke:0.24px #0c0c0c;">,молоко (как пример),120,32,"38,4","660,00",,"0,00%"</div>
<div class="t" style="left:2.10px;top:40.73px;font-size:8.96px;line-height:12px;letter-spacing:-0.174px;color:#0c0c0c;-webkit-text-stroke:0.24px #0c0c0c;">,мак,1450,20,290,"87,38",,"0,00%"</div>
<div class="t" style="left:2.10px;top:53.88px;font-size:8.96px;line-height:12px;letter-spacing:-0.112px;color:#0c0c0c;-webkit-text-stroke:0.24px #0c0c0c;">,тахинная паста,426,20,"85,2","297,42",,"0,00%"</div>
<div class="t" style="left:2.10px;top:67.03px;font-size:8.96px;line-height:12px;letter-spacing:-0.087px;color:#0c0c0c;-webkit-text-stroke:0.24px #0c0c0c;">,светлые типы мелассы из тростника и меласса из сахарной свёклы,</div>
<div class="t" style="left:283.75px;top:67.03px;font-size:8.96px;line-height:12px;letter-spacing:-0.135px;color:#0c0c0c;-webkit-text-stroke:0.24px #0c0c0c;">205,32,"65,6","386,28",,"0,00%"</div>
<div class="t" style="left:2.10px;top:80.18px;font-size:8.96px;line-height:12px;letter-spacing:-0.056px;color:#0c0c0c;-webkit-text-stroke:0.24px #0c0c0c;">,черная тростниковая меласса,667,32,"213,44","118,72",,</div>
<div class="t" style="left:2.10px;top:93.33px;font-size:8.96px;line-height:12px;letter-spacing:-0.168px;color:#0c0c0c;-webkit-text-stroke:0.24px #0c0c0c;">,крапива листья,700,20,140,"181,00",,"0,00%"</div>
<div class="t" style="left:2.10px;top:106.48px;font-size:8.96px;line-height:12px;letter-spacing:-0.119px;color:#0c0c0c;-webkit-text-stroke:0.24px #0c0c0c;">,чиа,630,20,126,"201,11",,"0,00%"</div>
<div class="t" style="left:2.10px;top:119.63px;font-size:8.96px;line-height:12px;letter-spacing:-0.087px;color:#0c0c0c;-webkit-text-stroke:0.24px #0c0c0c;">,сардины с костью консервы,380,32,"121,6","208,39",,"0,00%"</div>
<div class="t" style="left:2.10px;top:132.77px;font-size:8.96px;line-height:12px;letter-spacing:-0.106px;color:#0c0c0c;-webkit-text-stroke:0.24px #0c0c0c;">,базилик,177,32,"56,64","447,39",,"0,00%"</div>
<div class="t" style="left:2.10px;top:145.92px;font-size:8.96px;line-height:12px;letter-spacing:-0.110px;color:#0c0c0c;-webkit-text-stroke:0.24px #0c0c0c;">,соевый протеин,369,32,"118,08","214,60",,"0,00%"</div>
<div class="t" style="left:2.10px;top:159.07px;font-size:8.96px;line-height:12px;letter-spacing:0.008px;color:#0c0c0c;-webkit-text-stroke:0.24px #0c0c0c;">,"соевое мясо (в дегидратированном, </div>
<div class="t" style="left:161.25px;top:159.07px;font-size:8.96px;line-height:12px;letter-spacing:-0.320px;color:#0c0c0c;-webkit-text-stroke:0.24px #0c0c0c;">сухом виде</div>
<div class="t" style="left:205.00px;top:159.07px;font-size:8.96px;line-height:12px;letter-spacing:-0.176px;color:#0c0c0c;-webkit-text-stroke:0.24px #0c0c0c;">)",250,32,80,"316,75",,"0,00%"</div>
<div class="t" style="left:2.10px;top:172.22px;font-size:8.96px;line-height:12px;letter-spacing:-0.154px;color:#0c0c0c;-webkit-text-stroke:0.24px #0c0c0c;">,шпроты в масле,300,32,96,"263,96",,"0,00%"</div>
<div class="t" style="left:2.10px;top:185.37px;font-size:8.96px;line-height:12px;letter-spacing:-0.132px;color:#0c0c0c;-webkit-text-stroke:0.24px #0c0c0c;">,халва тахинная,424,20,"84,8","298,82",,"0,00%"</div>
<div class="t" style="left:2.10px;top:198.52px;font-size:8.96px;line-height:12px;letter-spacing:0.066px;color:#0c0c0c;-webkit-text-stroke:0.24px #0c0c0c;">,"капуста кале (кейл, </div>
<div class="t" style="left:92.50px;top:198.52px;font-size:8.96px;line-height:12px;letter-spacing:-0.059px;color:#0c0c0c;-webkit-text-stroke:0.24px #0c0c0c;">кудрявая капуста</div>
<div class="t" style="left:163.50px;top:198.52px;font-size:8.96px;line-height:12px;letter-spacing:-0.150px;color:#0c0c0c;-webkit-text-stroke:0.24px #0c0c0c;">)",150,49,"73,5","344,76",,"0,00%"</div>
</div>
<div class="b" style="left:16.2px;top:156px;width:1.9000000000000021px;height:208.5px;background:#107c41;"></div>
<div class="b" style="left:59px;top:156px;width:1.7999999999999972px;height:208.5px;background:#107c41;"></div>
<div class="b" style="left:16.2px;top:156px;width:44.599999999999994px;height:1.8000000000000114px;background:#107c41;"></div>
<div class="b" style="left:686.0px;top:144.0px;width:12.700000000000045px;height:220.5px;background:#f1f1f1;"></div>
<svg class="b" style="left:688.8px;top:146.3px;" width="7.6" height="5.2" viewBox="0 0 7.6 5.2"><path d="M3.8 0.3L7.3 4.8H0.3Z" fill="#555"/></svg>
<div class="b" style="left:689.2px;top:156.2px;width:6.199999999999932px;height:52.60000000000002px;background:#767676;border-radius:3px;"></div>
<svg class="b" style="left:688.8px;top:358.6px;" width="7.6" height="5.2" viewBox="0 0 7.6 5.2"><path d="M3.8 4.9L7.3 0.4H0.3Z" fill="#555"/></svg>
<div class="b" style="left:62px;top:350.3px;width:39.5px;height:14.0px;background:#fafafa;border:0.8px solid #c8c8c8;border-radius:1.5px;box-shadow:0 0.5px 1px rgba(0,0,0,0.15);"></div>
<svg class="b" style="left:64.5px;top:351.8px;" width="10" height="11" viewBox="0 0 10 11"><rect x="0.6" y="1.8" width="6.2" height="8.2" fill="none" stroke="#d9902f" stroke-width="1"/>
<rect x="2.2" y="0.5" width="3" height="2" fill="#d9902f"/>
<rect x="4.2" y="4.2" width="5" height="6.2" fill="#fff" stroke="#6b6b6b" stroke-width="0.8"/></svg>
<div class="t" style="left:76.50px;top:351.90px;font-size:7.43px;line-height:11px;letter-spacing:0.000px;color:#555;">(Ctrl)</div>
<svg class="b" style="left:95.2px;top:356px;" width="5" height="4" viewBox="0 0 5 4"><path d="M0.4 0.6H4.6L2.5 3.2Z" fill="#444"/></svg>
<div class="b" style="left:1.3px;top:364.5px;width:697.4000000000001px;height:21.100000000000023px;background:#f0f0f0;"></div>
<svg class="b" style="left:19.5px;top:371.5px;" width="5" height="8" viewBox="0 0 5 8"><path d="M4.2 0.6L0.8 4L4.2 7.4" fill="none" stroke="#b5b5b5" stroke-width="0.9"/></svg>
<svg class="b" style="left:40.5px;top:371.5px;" width="5" height="8" viewBox="0 0 5 8"><path d="M0.8 0.6L4.2 4L0.8 7.4" fill="none" stroke="#b5b5b5" stroke-width="0.9"/></svg>
<div class="b" style="left:78px;top:365.5px;width:33.5px;height:19.0px;background:#fff;border-radius:0 0 3px 3px;"></div>
<div class="t" style="left:82.80px;top:368.20px;font-size:8.30px;line-height:12px;letter-spacing:0.000px;color:#111;font-weight:bold;transform:scaleX(0.9577);transform-origin:0 50%;">Лист1</div>
<div class="b" style="left:82.5px;top:379.3px;width:23.5px;height:1.599999999999966px;background:#107c41;border-radius:1px;"></div>
<svg class="b" style="left:141.5px;top:370.5px;" width="8" height="8" viewBox="0 0 8 8"><path d="M4 0.4V7.6M0.4 4H7.6" stroke="#444" stroke-width="0.9"/></svg>
<div class="b" style="left:420.6px;top:371.5px;width:1.1999999999999886px;height:1.1999999999999886px;background:#555;border-radius:1px;"></div>
<div class="b" style="left:420.6px;top:374.3px;width:1.1999999999999886px;height:1.1999999999999886px;background:#555;border-radius:1px;"></div>
<div class="b" style="left:420.6px;top:377.1px;width:1.1999999999999886px;height:1.1999999999999886px;background:#555;border-radius:1px;"></div>
<svg class="b" style="left:434.3px;top:371.5px;" width="5.5" height="7" viewBox="0 0 5.5 7"><path d="M5 0.3V6.7L0.4 3.5Z" fill="#555"/></svg>
<div class="b" style="left:443px;top:371.9px;width:230.5px;height:6.400000000000034px;background:#767676;border-radius:3.2px;"></div>
<svg class="b" style="left:678.6px;top:371.5px;" width="5.5" height="7" viewBox="0 0 5.5 7"><path d="M0.5 0.3V6.7L5.1 3.5Z" fill="#555"/></svg>
<div class="b" style="left:1.3px;top:385.6px;width:697.4000000000001px;height:14.0px;background:#efefef;"></div>
<div class="b" style="left:1.3px;top:385.2px;width:697.4000000000001px;height:0.6999999999999886px;background:#dcdcdc;"></div>
<div class="t" style="left:8.00px;top:387.90px;font-size:7.77px;line-height:11px;letter-spacing:0.000px;color:#2b2b2b;-webkit-text-stroke:0.12px #2b2b2b;">Готово</div>
<svg class="b" style="left:44.5px;top:387.5px;" width="11" height="12" viewBox="0 0 11 12"><circle cx="4" cy="1.8" r="1.3" fill="none" stroke="#333" stroke-width="0.8"/>
<path d="M0.6 3.6C2.6 4.6 5.4 4.6 7.4 3.6M4 4.4V7.2M4 7.2L2 10.6M4 7.2L5.2 8.4" fill="none" stroke="#333" stroke-width="0.8"/>
<path d="M6.2 9.4L7.6 10.8L10.2 7.4" fill="none" stroke="#333" stroke-width="0.9"/></svg>
<div class="t" style="left:57.50px;top:387.90px;font-size:7.57px;line-height:11px;letter-spacing:0.000px;color:#2b2b2b;-webkit-text-stroke:0.12px #2b2b2b;">Специальные возможности: все в порядке</div>
<div class="t" style="left:428.70px;top:388.00px;font-size:7.37px;line-height:11px;letter-spacing:0.000px;color:#2b2b2b;-webkit-text-stroke:0.12px #2b2b2b;">Количество: 55</div>
<div class="b" style="left:494.6px;top:386.2px;width:24.799999999999955px;height:13.0px;background:#dadada;"></div>
<svg class="b" style="left:501.5px;top:388.2px;" width="9.2" height="9" viewBox="0 0 9 8"><rect x="0.5" y="0.5" width="8" height="7" fill="none" stroke="#333" stroke-width="0.8"/><path d="M3.2 0.5V7.5M5.8 0.5V7.5M0.5 2.8H8.5M0.5 5.2H8.5" stroke="#333" stroke-width="0.7"/></svg>
<svg class="b" style="left:528px;top:388.2px;" width="9.2" height="9" viewBox="0 0 9 8"><rect x="0.5" y="0.5" width="8" height="7" fill="none" stroke="#333" stroke-width="0.8"/><rect x="2.6" y="2" width="3.8" height="4.6" fill="none" stroke="#333" stroke-width="0.7"/></svg>
<svg class="b" style="left:554.2px;top:388.2px;" width="9.6" height="9" viewBox="0 0 9 8"><rect x="0.5" y="0.5" width="8" height="7" fill="none" stroke="#333" stroke-width="0.8"/><path d="M3 0.5V4.4H8.5" fill="none" stroke="#333" stroke-width="0.7"/></svg>
<div class="b" style="left:575.8px;top:392.5px;width:4.600000000000023px;height:1.0px;background:#333;"></div>
<div class="b" style="left:584px;top:392.7px;width:65.5px;height:0.8000000000000114px;background:#777;"></div>
<div class="b" style="left:616px;top:389.4px;width:3px;height:7.900000000000034px;background:#4a4a4a;"></div>
<svg class="b" style="left:652.6px;top:390.1px;" width="6" height="6" viewBox="0 0 6 6"><path d="M3 0.2V5.8M0.2 3H5.8" stroke="#333" stroke-width="0.8"/></svg>
<div class="t" style="left:667.60px;top:388.40px;font-size:6.84px;line-height:10px;letter-spacing:0.000px;color:#3a3a3a;">100 %</div>
<div class="b" style="left:0px;top:32px;width:1px;height:369px;background:#107c41;"></div>
<div class="b" style="left:1px;top:32px;width:1px;height:369px;background:rgba(16,124,65,0.12);"></div>
<div class="b" style="left:699px;top:32px;width:1px;height:369px;background:#107c41;"></div>
<div class="b" style="left:698px;top:32px;width:1px;height:369px;background:rgba(16,124,65,0.65);"></div>
<div class="b" style="left:0px;top:400px;width:700px;height:1px;background:#107c41;"></div>
<div class="b" style="left:0px;top:399px;width:700px;height:1px;background:rgba(16,124,65,0.15);"></div>
</body></html>
